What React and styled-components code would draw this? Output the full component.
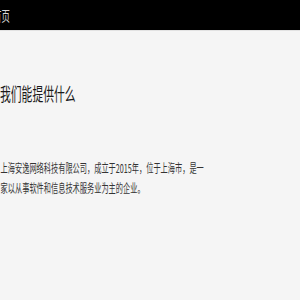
import React from 'react'
import styled, { createGlobalStyle } from 'styled-components'

const GlobalStyle = createGlobalStyle`
  html, body {
    margin: 0;
    padding: 0;
    background: #f5f5f5;
    font-family: "Noto Sans CJK SC", "Microsoft YaHei", sans-serif;
  }
`

const Page = styled.div`
  width: 300px;
  height: 300px;
  overflow: hidden;
  background: #f5f5f5;
  display: flex;
  flex-direction: column;
`

const TopBar = styled.div`
  height: 30px;
  background: #000;
  border-bottom: 1px solid #e2e2e2;
  display: flex;
  align-items: center;
  overflow: hidden;
`

// the screenshot text is squeezed horizontally
const Squeezed = styled.span`
  display: inline-block;
  white-space: nowrap;
  transform: scaleX(0.6);
  transform-origin: left center;
`

const NavItem = styled(Squeezed)`
  margin-left: -7px;
  font-size: 14px;
  line-height: 1;
  color: #d8d8d8;
`

const Content = styled.div`
  display: flex;
  flex-direction: column;
  padding-top: 51px;
`

const Title = styled(Squeezed)`
  font-size: 18px;
  line-height: 22px;
  color: #1a1a1a;
`

const Intro = styled.div`
  margin-top: 54px;
  display: flex;
  flex-direction: column;
`

const Line = styled(Squeezed)`
  font-size: 12px;
  line-height: 20px;
  color: #333;
  padding-left: 1px;
`

function App() {
  return (
    <Page>
      <GlobalStyle />
      <TopBar>
        <NavItem>首页</NavItem>
      </TopBar>
      <Content>
        <Title>我们能提供什么</Title>
        <Intro>
          <Line>上海安逸网络科技有限公司，成立于2015年，位于上海市，是一</Line>
          <Line>家以从事软件和信息技术服务业为主的企业。</Line>
        </Intro>
      </Content>
    </Page>
  )
}

export default App
